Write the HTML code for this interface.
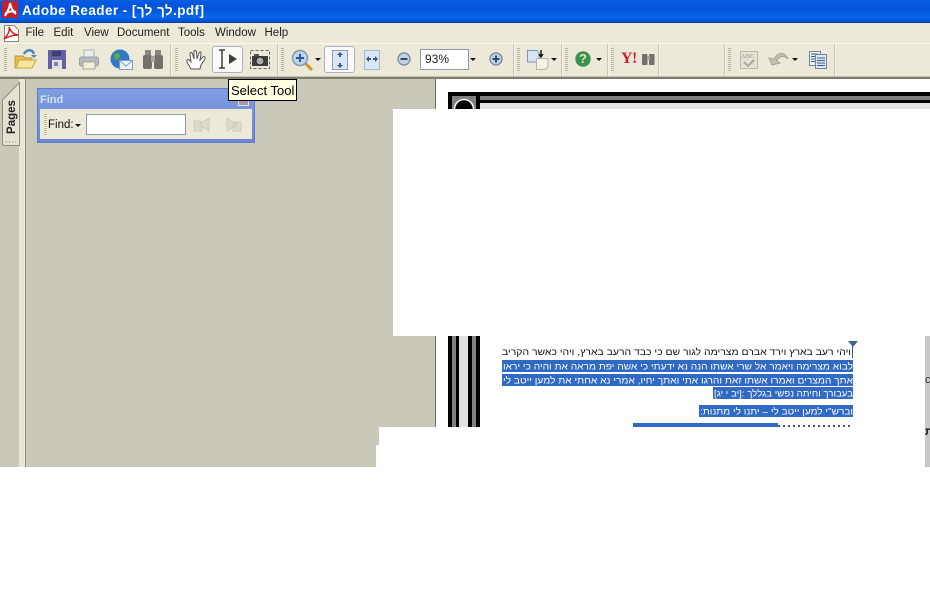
<!DOCTYPE html>
<html><head><meta charset="utf-8"><style>
html,body{margin:0;padding:0;background:#fff}
#p{position:relative;width:930px;height:600px;overflow:hidden;background:#fff;font-family:"Liberation Sans",sans-serif}
.a{position:absolute}
.m{position:absolute;top:26px;font-size:11.5px;color:#222;line-height:14px}
.g{position:absolute;top:48px;width:3px;height:24px;background:repeating-linear-gradient(#b5b39c 0 1px,#f0eee0 1px 2px)}
.s{position:absolute;top:44px;width:1px;height:32px;background:#c9c6b2;border-right:1px solid #f5f3e8}
svg{position:absolute;overflow:visible}
</style></head><body><div id="p">
<div class="a" style="left:0;top:0;width:930px;height:23px;background:linear-gradient(#0a5fe0 0,#0457e0 3px,#0255d8 10px,#0a66ee 17px,#0452d0 21px,#0040a8 23px)"></div>
<svg style="left:2px;top:1px" width="16" height="17"><rect width="16" height="17" fill="#c8202a"/><path d="M3 15C6 10 8 5 8 2M8 2C9 7 11 11 14 13M3 13C7 10 10 10 14 11" stroke="#fff" stroke-width="2" fill="none"/></svg>
<div class="a" style="left:22px;top:3px;font-size:13.500px;font-weight:bold;color:#fff;line-height:15px;white-space:nowrap;letter-spacing:.42px">Adobe Reader - [לך לך.pdf]</div>
<div class="a" style="left:0;top:23px;width:930px;height:53px;background:#ece9d8"></div>
<div class="a" style="left:0;top:43px;width:930px;height:1px;background:#fbfaf2"></div>
<svg style="left:3px;top:25px" width="17" height="17"><path d="M1.500 .5H11L15.500 5V16.500H1.500Z" fill="#fff" stroke="#8a8a80"/><path d="M1 14C5 10 7 6 6 2 8 7 10 9 15 10 9 10 5 12 1 14Z" fill="none" stroke="#d01818" stroke-width="1.400"/></svg>
<div class="m" style="left:25.500px">File</div><div class="m" style="left:53.500px">Edit</div><div class="m" style="left:84px">View</div><div class="m" style="left:117px">Document</div><div class="m" style="left:178px">Tools</div><div class="m" style="left:215px">Window</div><div class="m" style="left:264.500px">Help</div>
<div class="a" style="left:0;top:76px;width:930px;height:3px;background:linear-gradient(#c4c2b0 0 1px,#7f7d6c 1px)"></div>
<div class="g" style="left:4px"></div><div class="s" style="left:170px"></div><div class="g" style="left:175px"></div><div class="s" style="left:277px"></div><div class="g" style="left:281px"></div><div class="s" style="left:513px"></div><div class="g" style="left:517px"></div><div class="s" style="left:561px"></div><div class="g" style="left:565px"></div><div class="s" style="left:607px"></div><div class="g" style="left:611px"></div><div class="s" style="left:658px"></div><div class="s" style="left:724px"></div><div class="g" style="left:728px"></div><div class="s" style="left:834px"></div>
<svg style="left:14px;top:48px" width="23" height="22"><path d="M1 20V8H9L11 10H18V20Z" fill="#e8c050" stroke="#b89a40"/><path d="M2 20 5 12H22L18 20Z" fill="#fbe69a" stroke="#c4a440"/><path d="M10 6C13 1 18 1 20 6" fill="none" stroke="#4c84bc" stroke-width="2.500"/><path d="M17 7H23L20 10Z" fill="#4c84bc"/></svg>
<svg style="left:48px;top:50px" width="18" height="19"><rect width="18" height="19" fill="#64619f"/><rect x="4" y="1" width="9" height="5" fill="#3e3e76"/><rect x="4" y="10" width="10" height="9" fill="#e0e0e6"/><rect x="6" y="12" width="4" height="4" fill="#8280b0"/></svg>
<svg style="left:79px;top:50px" width="20" height="20"><rect x="5" y="0" width="10" height="8" fill="#ececec" stroke="#b0b4ba"/><rect x=".5" y="7" width="19" height="9" rx="2" fill="#b4b8c0" stroke="#9a9ea6"/><rect x="4" y="12" width="12" height="7" fill="#f2efd6" stroke="#a8a89e"/></svg>
<svg style="left:110px;top:49px" width="23" height="22"><circle cx="10" cy="10" r="9.500" fill="#2f78c4"/><path d="M4 5C8 3 11 5 10 8S5 12 4 9ZM12 12C16 11 17 14 14 18 12 17 11 14 12 12Z" fill="#5aa848"/><rect x="9.500" y="11.500" width="13" height="9" fill="#eef4fb" stroke="#7e9cc0"/><path d="M10 12 16 17 22 12" fill="none" stroke="#7e9cc0"/></svg>
<svg style="left:143px;top:50px" width="20" height="19"><rect x="2" y="0" width="6" height="6" fill="#8a8880"/><rect x="12" y="0" width="6" height="6" fill="#8a8880"/><rect x="0" y="5" width="9" height="14" rx="2" fill="#73726a"/><rect x="11" y="5" width="9" height="14" rx="2" fill="#73726a"/><rect x="8" y="6" width="4" height="6" fill="#a6a49a"/></svg>
<svg style="left:186px;top:50px" width="20" height="21"><path d="M5 19C3 15 0 12 1 10S4 11 5 12L4 4C4 2 6 2 6.500 4L8 9V2C8 0 10 0 10.500 2L11 9 13 3C13.500 1 15.500 2 15 4L14 10 17 7C18.500 6 19.500 7 19 9L15 15 14 19Z" fill="#fff" stroke="#555" stroke-width="1"/></svg>
<div class="a" style="left:212px;top:46px;width:31px;height:27px;box-sizing:border-box;background:#fbfaf6;border:1px solid #a8b2c4;border-radius:3px"></div>
<svg style="left:218px;top:49px" width="20" height="20"><path d="M1 1H7M1 19H7M4 1V19" stroke="#222" stroke-width="1.300" fill="none"/><path d="M11 5 19 10 11 15Z" fill="#3c3c3c"/></svg>
<svg style="left:250px;top:50px" width="20" height="19"><rect x=".5" y=".5" width="19" height="18" fill="none" stroke="#666" stroke-dasharray="3 2"/><rect x="2" y="6" width="16" height="10" fill="#3f3f3f"/><circle cx="10" cy="11" r="4" fill="#aaa" stroke="#222"/><rect x="4" y="4" width="5" height="2" fill="#555"/></svg>
<svg style="left:291px;top:49px" width="23" height="23"><path d="M14 14 21 21" stroke="#c9953a" stroke-width="3"/><circle cx="9" cy="9" r="7.500" fill="#bcd4ec" stroke="#8a98a8" stroke-width="1.500"/><path d="M5 9H13M9 5V13" stroke="#2a5a9a" stroke-width="2"/></svg>
<svg style="left:315px;top:58px" width="6" height="3"><path d="M0 0H6L3 3Z" fill="#111"/></svg>
<div class="a" style="left:324px;top:46px;width:31px;height:27px;box-sizing:border-box;background:#fbfaf6;border:1px solid #a8b2c4;border-radius:3px"></div>
<svg style="left:332px;top:50px" width="16" height="20"><rect x=".5" y=".5" width="15" height="19" fill="#d8e6f5" stroke="#8aa0b8"/><path d="M8 2 5 5H7V7H9V5H11ZM8 18 5 15H7V13H9V15H11Z" fill="#3c5a80"/></svg>
<svg style="left:364px;top:50px" width="16" height="20"><rect x=".5" y=".5" width="15" height="19" fill="#d8e6f5" stroke="#a9bace"/><path d="M2 9 5 6V8H7V10H5V12ZM14 9 11 6V8H9V10H11V12Z" fill="#3c5a80"/></svg>
<svg style="left:397px;top:52px" width="14" height="14"><circle cx="7" cy="7" r="6" fill="#c4d2e2" stroke="#7e8fa6" stroke-width="1.400"/><path d="M3.500 7H10.500" stroke="#2d4a74" stroke-width="2"/></svg>
<div class="a" style="left:420px;top:49px;width:49px;height:21px;box-sizing:border-box;background:#fff;border:1px solid #8d9bac;font-size:12px;line-height:19px;padding-left:4px;color:#222">93%</div>
<svg style="left:470px;top:58px" width="6" height="3"><path d="M0 0H6L3 3Z" fill="#111"/></svg>
<svg style="left:489px;top:52px" width="14" height="14"><circle cx="7" cy="7" r="6" fill="#c4d2e2" stroke="#7e8fa6" stroke-width="1.400"/><path d="M3.500 7H10.500M7 3.500V10.500" stroke="#2d4a74" stroke-width="2"/></svg>
<svg style="left:527px;top:50px" width="22" height="20"><path d="M.5.500H10L12 3V12H.5Z" fill="#d7e6f7" stroke="#7e94b0"/><path d="M9.500 8.500H21V17L18 19.500H9.500Z" fill="#f4f2e6" stroke="#b8b6a6"/><path d="M14 0V6M12 4 14 7 16 4" stroke="#111" stroke-width="1.400" fill="none"/></svg>
<svg style="left:551px;top:58px" width="6" height="3"><path d="M0 0H6L3 3Z" fill="#111"/></svg>
<svg style="left:575px;top:51px" width="16" height="16"><circle cx="8" cy="8" r="7.700" fill="#3a9150"/></svg>
<div class="a" style="left:575px;top:51px;width:16px;text-align:center;font-size:13px;line-height:16px;font-weight:bold;color:#e4e8a8">?</div>
<svg style="left:596px;top:58px" width="6" height="3"><path d="M0 0H6L3 3Z" fill="#111"/></svg>
<div class="a" style="left:621px;top:51px;font-family:'Liberation Serif',serif;font-size:16px;font-weight:bold;color:#d0202c;line-height:16px;letter-spacing:-.5px">Y!</div>
<svg style="left:642px;top:53px" width="13" height="12"><rect x="0" y="1" width="5.500" height="11" rx="1" fill="#73726a"/><rect x="7" y="1" width="5.500" height="11" rx="1" fill="#73726a"/><rect x="5" y="3" width="3" height="4" fill="#a6a49a"/></svg>
<svg style="left:740px;top:51px" width="18" height="18"><rect x=".5" y=".5" width="17" height="17" fill="#e4e2d4" stroke="#bcbaaa"/><path d="M4 11 8 15 14 9" stroke="#aaa99a" stroke-width="2" fill="none"/></svg>
<div class="a" style="left:741px;top:53px;font-family:'Liberation Serif',serif;font-size:6.500px;color:#99988a;line-height:7px">ABC</div>
<svg style="left:768px;top:51px" width="21" height="15"><path d="M4 14 1 7 6 8C9 2 16-1 20 8 15 4 11 5 9 10L12 12Z" fill="#c2c0b2" stroke="#a8a698"/></svg>
<svg style="left:792px;top:58px" width="6" height="3"><path d="M0 0H6L3 3Z" fill="#111"/></svg>
<svg style="left:809px;top:51px" width="18" height="18"><rect x=".5" y=".5" width="11" height="14" fill="#eef2f8" stroke="#6e86a6"/><path d="M2 3H9M2 5.500H9M2 8H9M2 10.500H9" stroke="#3f5c86"/><rect x="6.500" y="3.500" width="11" height="14" fill="#dde6f2" stroke="#6e86a6"/><path d="M8 7H16M8 9.500H16M8 12H16M8 14.500H16" stroke="#3f5c86"/></svg>

<div class="a" style="left:0;top:79px;width:930px;height:388px;background:#cac8b8"></div>
<div class="a" style="left:19px;top:79px;width:7px;height:388px;background:#e9e6d7;border-right:1px solid #8f8d7c;box-sizing:border-box"></div>
<svg style="left:2px;top:82px" width="18" height="65"><path d="M17.500 .5V63.500H1.500L.5 62V18Z" fill="#e4e1d2" stroke="#8f8d7c"/><path d="M4 60H16" stroke="#99978a" stroke-dasharray="1 2"/></svg>
<div class="a" style="left:-9px;top:110px;width:42px;height:14px;line-height:14px;text-align:center;font-size:11.500px;font-weight:bold;color:#222;transform:rotate(-90deg)">Pages</div>

<div class="a" style="left:37px;top:88px;width:218px;height:55px;background:linear-gradient(#7f9ee0,#6a86d4);box-shadow:inset 0 0 0 1px #5f7cc8"></div>
<div class="a" style="left:40px;top:94px;font-size:11px;font-weight:bold;color:#d6e2f8;line-height:13px">Find</div>
<div class="a" style="left:238px;top:97px;width:11px;height:9px;background:#b98fa8;border:1px solid #dfe2ee;box-sizing:border-box"></div>
<div class="a" style="left:40px;top:109px;width:212px;height:30px;background:#ece9d8"></div>
<div class="a" style="left:44px;top:114px;width:3px;height:21px;background:repeating-linear-gradient(#b5b38c 0 1px,#f7f5ea 1px 2px)"></div>
<div class="a" style="left:48px;top:118px;font-size:11.500px;line-height:14px;color:#111">Find:</div>
<svg style="left:75px;top:124px" width="6" height="3"><path d="M0 0H6L3 3Z" fill="#111"/></svg>
<div class="a" style="left:86px;top:114px;width:100px;height:21px;box-sizing:border-box;background:#fff;border:1px solid #8d9bac"></div>
<svg style="left:193px;top:117px" width="18" height="15"><path d="M16 1 6 7.500 16 14ZM1 4H8L9 14H1Z" fill="#dedbcc" stroke="#cfccbc"/></svg>
<svg style="left:225px;top:117px" width="18" height="15"><path d="M2 1 12 7.500 2 14ZM9 5H16V14H8Z" fill="#dedbcc" stroke="#cfccbc"/></svg>

<div class="a" style="left:435px;top:79px;width:1px;height:348px;background:#6f6e5f"></div>
<div class="a" style="left:436px;top:79px;width:494px;height:348px;background:#fff"></div>
<div class="a" style="left:925px;top:336px;width:5px;height:131px;background:#c8c8c8"></div>

<div class="a" style="left:448px;top:92px;width:482px;height:4px;background:#000"></div>
<div class="a" style="left:480px;top:96px;width:450px;height:4px;background:#808080"></div>
<div class="a" style="left:480px;top:100px;width:450px;height:3px;background:#000"></div>
<div class="a" style="left:480px;top:103px;width:450px;height:6px;background:#e2e2e2"></div>
<div class="a" style="left:448px;top:96px;width:4px;height:13px;background:#000"></div>
<div class="a" style="left:452px;top:96px;width:24px;height:13px;background:#808080"></div>
<div class="a" style="left:476px;top:96px;width:4px;height:13px;background:#000"></div>
<svg style="left:452px;top:96px" width="24" height="13"><circle cx="12" cy="13" r="9.500" fill="#000" stroke="#fff" stroke-width="1.500"/></svg>

<div class="a" style="left:448px;top:336px;width:32px;height:91px;background:linear-gradient(90deg,#000 0 4px,#808080 4px 8px,#000 8px 11px,#e2e2e2 11px 20px,#000 20px 24px,#808080 24px 28px,#000 28px 32px)"></div>

<div class="a" style="left:502px;top:360px;width:351px;height:12px;background:#316ac5"></div>
<div class="a" style="left:502px;top:374px;width:351px;height:12px;background:#316ac5"></div>
<div class="a" style="left:713px;top:387px;width:140px;height:12px;background:#316ac5"></div>
<div class="a" style="left:699px;top:405px;width:154px;height:12px;background:#316ac5"></div>
<div class="a" style="left:633px;top:423px;width:145px;height:4px;background:#316ac5"></div>
<div class="a" style="left:778px;top:425px;width:75px;height:2px;background:repeating-linear-gradient(90deg,#555 0 2px,#fff 2px 5px)"></div>
<svg style="left:848px;top:341px" width="10" height="6"><path d="M0 0H10L5 6Z" fill="#3a5f9a"/></svg>
<div class="a" style="left:852px;top:346px;width:1px;height:12px;background:#3a5f9a"></div>
<svg style="left:0;top:0" width="930" height="600" font-family="'Liberation Sans',sans-serif" font-size="9.500" direction="rtl">
<text x="851" y="355" fill="#111" text-anchor="start" textLength="349" lengthAdjust="spacingAndGlyphs">ויהי רעב בארץ וירד אברם מצרימה לגור שם כי כבד הרעב בארץ, ויהי כאשר הקריב</text>
<text x="853" y="369.500" fill="#fff" text-anchor="start" textLength="350" lengthAdjust="spacingAndGlyphs">לבוא מצרימה ויאמר אל שרי אשתו הנה נא ידעתי כי אשה יפת מראה את והיה כי יראו</text>
<text x="853" y="383.500" fill="#fff" text-anchor="start" textLength="350" lengthAdjust="spacingAndGlyphs">אתך המצרים ואמרו אשתו זאת והרגו אתי ואתך יחיו, אמרי נא אחתי את למען ייטב לי</text>
<text x="853" y="396.500" fill="#fff" text-anchor="start" textLength="139" lengthAdjust="spacingAndGlyphs">בעבורך וחיתה נפשי בגללך :[יב י יג]</text>
<text x="853" y="414.500" fill="#fff" text-anchor="start" textLength="153" lengthAdjust="spacingAndGlyphs">וברש"י למען ייטב לי – יתנו לי מתנות:</text>
</svg>
<div class="a" style="left:925px;top:373px;width:5px;height:14px;overflow:hidden;font-size:11px;line-height:14px;color:#333">c</div>
<div class="a" style="left:925px;top:425px;width:5px;height:14px;overflow:hidden;font-size:11px;font-weight:bold;line-height:14px;color:#111">ת</div>

<div class="a" style="left:393px;top:109px;width:537px;height:227px;background:#fff"></div>
<div class="a" style="left:379px;top:427px;width:546px;height:18px;background:#fff"></div>
<div class="a" style="left:376px;top:445px;width:549px;height:22px;background:#fff"></div>
<div class="a" style="left:228px;top:79px;width:69px;height:22px;box-sizing:border-box;background:#ffffe1;border:1px solid #000;font-size:13px;line-height:21px;padding-left:2px;color:#000;white-space:nowrap">Select Tool</div>
</div></body></html>
